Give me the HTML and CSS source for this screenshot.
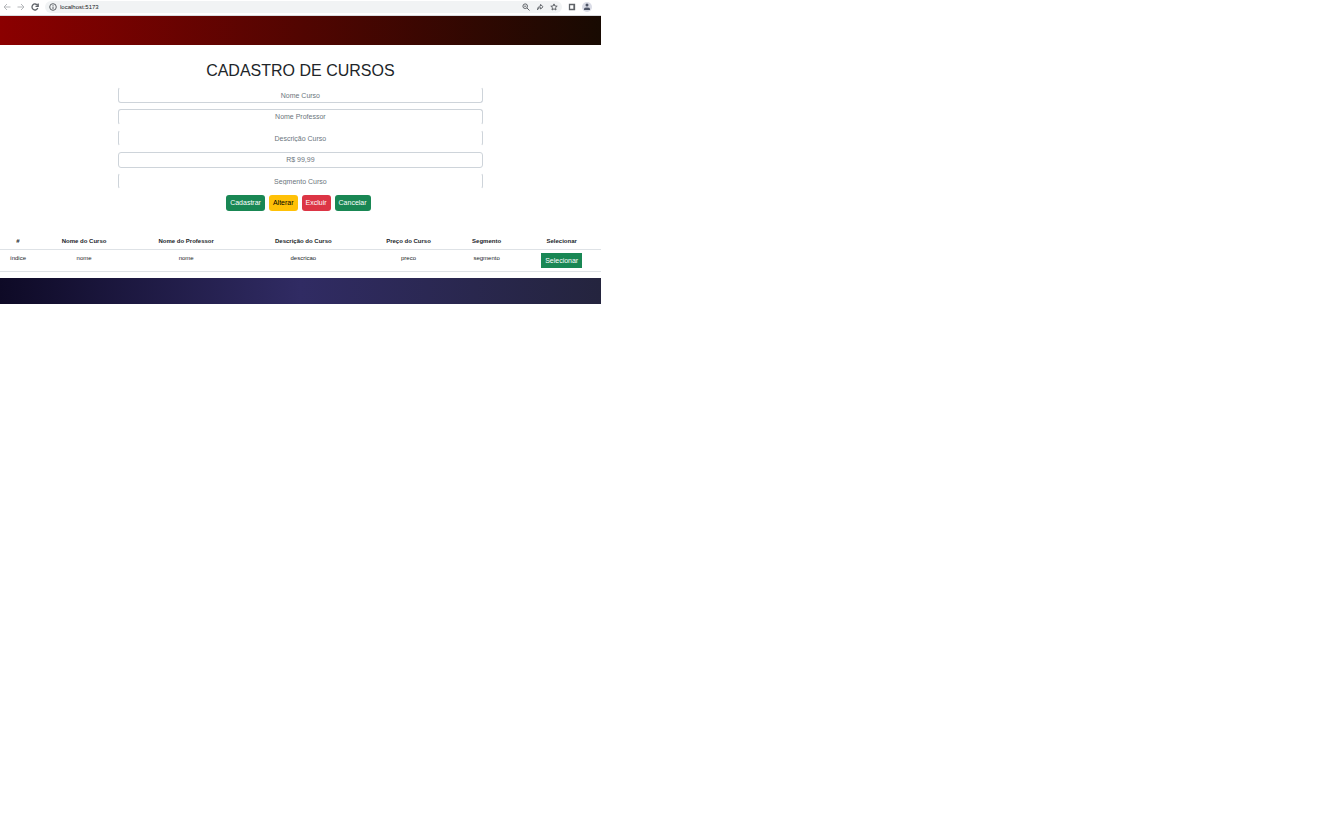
FILE: index.html
```html
<!DOCTYPE html>
<html lang="pt-BR">
<head>
<meta charset="utf-8">
<title>Cadastro de Cursos</title>
<link rel="stylesheet" href="styles.css">
</head>
<body>
<div class="browser">
  <nav class="toolbar" aria-label="Navegador">
    <button class="icon-button muted" aria-label="Voltar"><svg viewBox="0 0 8 8"><path d="M7.5 4H1M4 1L1 4l3 3"/></svg></button>
    <button class="icon-button muted" aria-label="Avançar"><svg viewBox="0 0 8 8"><path d="M.5 4H7M4 1l3 3-3 3"/></svg></button>
    <button class="icon-button reload" aria-label="Recarregar"><svg viewBox="0 0 8 8"><path d="M6.4 2.2A3 3 0 1 0 6.8 5M7.2.5v2.8H4.5"/></svg></button>
    <div class="address">
      <svg class="info" viewBox="0 0 8 8"><circle cx="4" cy="4" r="3.3"/><path d="M4 3.5V6M4 2v.8"/></svg>
      <input class="url" aria-label="Endereço" value="localhost:5173">
      <button class="icon-button" aria-label="Zoom"><svg viewBox="0 0 8 8"><circle cx="3.2" cy="3.2" r="2.3"/><path d="M5 5l2.5 2.5M2.2 3.2h2"/></svg></button>
      <button class="icon-button" aria-label="Compartilhar"><svg viewBox="0 0 8 8"><path d="M1.5 6.8C1.7 4.4 2.7 3.2 4.6 3V1.4L7 3.8 4.6 6V4.6C3.2 4.6 2.3 5.4 1.5 6.8z"/></svg></button>
      <button class="icon-button" aria-label="Favoritos"><svg viewBox="0 0 8 8"><path d="M4 .9l.9 2.1 2.3.2-1.7 1.5.5 2.3-2-1.2L2 7l.5-2.3L.8 3.2 3.1 3z"/></svg></button>
    </div>
    <button class="icon-button panel" aria-label="Painel lateral"><svg viewBox="0 0 8 8"><path d="M1.5 1.5h5v5h-5zM6 1.5v5"/></svg></button>
    <button class="icon-button avatar" aria-label="Perfil"><svg viewBox="0 0 10 10"><circle cx="5" cy="3" r="1.5"/><path d="M2 8V6.6Q2 5.4 5 5.4T8 6.6V8z"/></svg></button>
  </nav>
  <header class="banner"></header>
  <main>
    <form class="course-form">
      <h1>CADASTRO DE CURSOS</h1>
      <div class="fields">
        <input class="field open-top" aria-label="Nome Curso" placeholder="Nome Curso">
        <input class="field open-bottom" aria-label="Nome Professor" placeholder="Nome Professor">
        <input class="field open-top open-bottom" aria-label="Descrição Curso" placeholder="Descrição Curso">
        <input class="field" aria-label="Preço" placeholder="R$ 99,99">
        <input class="field open-top open-bottom" aria-label="Segmento Curso" placeholder="Segmento Curso">
      </div>
      <div class="actions">
        <button type="button" class="btn success">Cadastrar</button>
        <button type="button" class="btn warning">Alterar</button>
        <button type="button" class="btn danger">Excluir</button>
        <button type="button" class="btn success">Cancelar</button>
      </div>
    </form>
    <table class="courses">
      <colgroup><col class="c-index"><col class="c-name"><col class="c-teacher"><col class="c-desc"><col class="c-price"><col class="c-segment"><col class="c-select"></colgroup>
      <thead>
        <tr><th>#</th><th>Nome do Curso</th><th>Nome do Professor</th><th>Descrição do Curso</th><th>Preço do Curso</th><th>Segmento</th><th>Selecionar</th></tr>
      </thead>
      <tbody>
        <tr><td>índice</td><td>nome</td><td>nome</td><td>descricao</td><td>preco</td><td>segmento</td><td><button type="button" class="btn success square">Selecionar</button></td></tr>
      </tbody>
    </table>
  </main>
  <footer class="footer"></footer>
</div>
</body>
</html>
```
FILE: styles.css
```css
* { box-sizing: border-box; }
body { margin: 0; background: #fff; color: #212529; font: 6px/10px "Liberation Sans", Arial, sans-serif; }
button, input { font: inherit; }
.browser { width: 45%; }

.toolbar { display: flex; align-items: center; height: 16px; padding: 0 9px 2px 3px; gap: 6px; border-bottom: 1px solid #dadce0; }
.icon-button { display: flex; flex: none; padding: 0; border: 0; background: none; color: #5f6368; }
.icon-button.muted { color: #b5b7ba; }
.toolbar svg { width: 8px; height: 8px; fill: none; stroke: currentColor; stroke-width: 1; }
.toolbar .reload svg, .toolbar .panel svg { stroke-width: 1.3; }
.address { display: flex; flex: 1; align-items: center; gap: 6px; height: 12px; padding: 0 4px; border-radius: 6px; background: #f1f3f4; color: #5f6368; }
.address .info { flex: none; }
.url { flex: 1; min-width: 0; margin-left: -3px; padding: 0; border: 0; background: none; color: #202124; }
.toolbar .avatar { border-radius: 50%; background: #dadce6; }
.toolbar .avatar svg { width: 10px; height: 10px; fill: #4f5668; stroke: none; }

.banner { height: 29px; background: linear-gradient(to right, #8b0000, #180a02); }

.course-form { padding: 16px 0 25px; }
h1 { margin: 0 0 6px; font-size: 16px; line-height: 20px; font-weight: 400; text-align: center; }
.fields { display: flex; flex-direction: column; justify-content: space-between; min-height: 102px; margin: 0 118px 6px; }
.field { width: 100%; height: 16px; padding: 0 4px; border: 1px solid #ced4da; border-radius: 3px; background: #fff; font-size: 7px; text-align: center; }
.field::placeholder { color: #6c757d; opacity: 1; }
.open-top { border-top-color: transparent; }
.open-bottom { border-bottom-color: transparent; }
.actions { display: flex; justify-content: center; gap: 4px; padding-right: 4px; }
.btn { height: 16px; padding: 0 4px; border: 0; border-radius: 3px; color: #fff; font-size: 7px; }
.success { background: #198754; }
.warning { background: #ffc107; color: #000; }
.danger { background: #dc3545; }
.square { height: 15px; border-radius: 0; }

.courses { width: 100%; table-layout: fixed; border-collapse: collapse; text-align: center; }
.courses th, .courses td { padding: 3px 0; border-bottom: 1px solid #dee2e6; vertical-align: top; }
.courses th { padding-top: 0; font-weight: 700; }
.courses .btn { display: block; margin: 0 auto; }
.c-index { width: 6%; }
.c-name { width: 16%; }
.c-teacher { width: 18%; }
.c-desc { width: 21%; }
.c-price { width: 14%; }
.c-segment { width: 12%; }
.c-select { width: 13%; }

.footer { height: 26px; margin-top: 6px; background: linear-gradient(to right, #0e0a26, #302b63 50%, #24243e); }
```
